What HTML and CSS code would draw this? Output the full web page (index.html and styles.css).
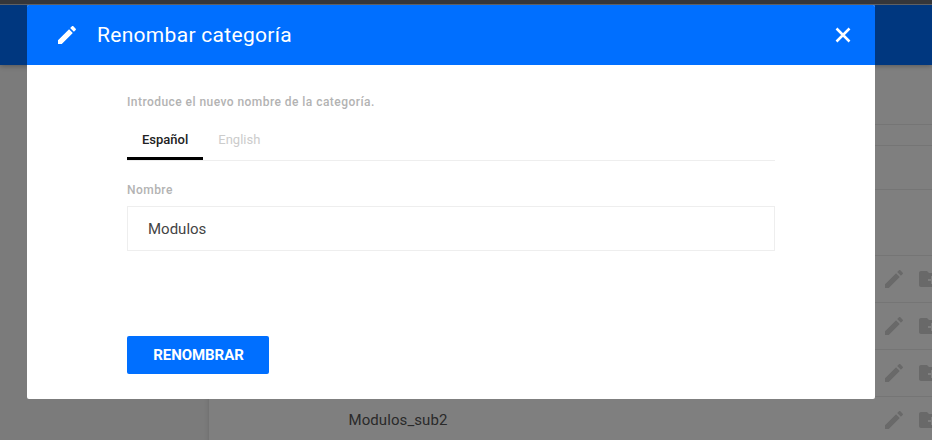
FILE: index.html
```html
<!DOCTYPE html>
<html lang="es">
<head>
<meta charset="utf-8">
<title>Categorías</title>
<link rel="stylesheet" href="styles.css">
</head>
<body>
<svg width="0" height="0" class="defs">
  <symbol id="pencil" viewBox="0 0 24 24"><path d="M3 17.25V21h3.75L17.81 9.94l-3.75-3.75L3 17.25zM20.71 7.04c.39-.39.39-1.02 0-1.41l-2.34-2.34c-.39-.39-1.02-.39-1.41 0l-1.83 1.83 3.75 3.75 1.83-1.83z"/></symbol>
  <symbol id="folder" viewBox="0 0 24 24"><path d="M20 6h-8l-2-2H4c-1.11 0-1.99.89-1.99 2L2 18c0 1.11.89 2 2 2h16c1.11 0 2-.89 2-2V8c0-1.11-.89-2-2-2zm-1 8h-3v3h-2v-3h-3v-2h3V9h2v3h3v2z"/></symbol>
</svg>
<div class="chrome"></div>
<div class="app">
  <header class="topbar"></header>
  <main class="panel">
    <div class="row row-title"></div>
    <div class="row row-gap"></div>
    <div class="row row-tools"></div>
    <div class="row row-head"></div>
    <div class="row item"><svg class="icon"><use href="#pencil"/></svg><svg class="icon"><use href="#folder"/></svg></div>
    <div class="row item"><svg class="icon"><use href="#pencil"/></svg><svg class="icon"><use href="#folder"/></svg></div>
    <div class="row item"><svg class="icon"><use href="#pencil"/></svg><svg class="icon"><use href="#folder"/></svg></div>
    <div class="row item"><span class="name">Modulos_sub2</span><svg class="icon"><use href="#pencil"/></svg><svg class="icon"><use href="#folder"/></svg></div>
  </main>
</div>
<div class="overlay">
  <section class="modal">
    <header class="modal-head">
      <svg class="head-icon"><use href="#pencil"/></svg>
      <h1>Renombar categoría</h1>
      <svg class="close" viewBox="0 0 16 16"><path d="M1.5 1.5l13 13M14.5 1.5l-13 13"/></svg>
    </header>
    <div class="modal-body">
      <p class="intro">Introduce el nuevo nombre de la categoría.</p>
      <nav class="tabs"><span class="tab active">Español</span><span class="tab">English</span></nav>
      <label class="label" for="name">Nombre</label>
      <input class="field" id="name" type="text" value="Modulos">
      <button class="submit" type="button">RENOMBRAR</button>
    </div>
  </section>
</div>
</body>
</html>
```
FILE: styles.css
```css
* { box-sizing: border-box; }
body {
  margin: 0;
  height: 440px;
  overflow: hidden;
  background: #f6f6f6;
  font-family: Roboto, sans-serif;
}
.defs { position: absolute; }
.chrome {
  height: 5px;
  background: #35363a;
  border-bottom: 1px solid #5f6063;
}
.app { height: 435px; overflow: hidden; }
.topbar {
  position: relative;
  height: 60px;
  background: #006fff;
  box-shadow: 0 1px 5px rgba(0, 0, 0, .3);
}
.panel {
  margin-left: 209px;
  background: #fff;
  box-shadow: 0 0 5px rgba(0, 0, 0, .15);
}
.row { border-bottom: 1px solid #eaeaea; }
.row-title { height: 60px; }
.row-gap { height: 21px; }
.row-tools { height: 44px; }
.row-head { height: 66px; }
.item {
  display: flex;
  align-items: center;
  justify-content: flex-end;
  height: 47px;
  margin-right: -9px;
}
.icon {
  flex: none;
  width: 24px;
  height: 24px;
  margin-left: 11px;
  fill: #d2d2d2;
}
.item .icon:first-of-type { margin-left: 0; }
.name {
  flex: 1;
  padding-left: 139.5px;
  font-size: 15px;
  letter-spacing: .08px;
  color: #555;
}
.overlay {
  position: absolute;
  top: 5px;
  left: 0;
  width: 932px;
  height: 435px;
  background: rgba(0, 0, 0, .5);
}
.modal {
  width: 848px;
  height: 394px;
  margin-left: 27px;
  overflow: hidden;
  border-radius: 2px;
  background: #fff;
}
.modal-head {
  display: flex;
  align-items: center;
  height: 60px;
  padding: 0 24px 0 28px;
  background: #006fff;
  color: #fff;
}
.head-icon {
  width: 24px;
  height: 24px;
  fill: #fff;
}
.modal-head h1 {
  flex: 1;
  margin: 0 0 0 18px;
  font-size: 21px;
  font-weight: 400;
  letter-spacing: .3px;
}
.close {
  width: 16px;
  height: 16px;
  fill: none;
  stroke: #fff;
  stroke-width: 2.5;
}
.modal-body {
  display: flex;
  flex-direction: column;
  padding: 29px 100px 0;
}
.intro, .label {
  margin: 0;
  font-size: 12px;
  font-weight: 500;
  line-height: 16px;
  letter-spacing: .45px;
  color: #b3b3b3;
}
.tabs {
  display: flex;
  height: 51px;
  padding-top: 15px;
  border-bottom: 1px solid #eee;
}
.tab {
  height: 35px;
  padding: 0 15px;
  font-size: 13px;
  line-height: 30px;
  color: #ccc;
}
.active {
  border-bottom: 3px solid #000;
  font-weight: 500;
  color: #222;
}
.label { margin-top: 21px; }
.field {
  width: 100%;
  height: 45px;
  margin-top: 8px;
  padding: 0 20px;
  border: 1px solid #eee;
  font: 15px Roboto, sans-serif;
  color: #444;
}
.submit {
  width: 142px;
  height: 38px;
  margin-top: 85px;
  padding: 0 0 0 1px;
  border: 0;
  border-radius: 2px;
  background: #006fff;
  font: 700 15px Roboto, sans-serif;
  letter-spacing: -.05px;
  color: #fff;
}
```
